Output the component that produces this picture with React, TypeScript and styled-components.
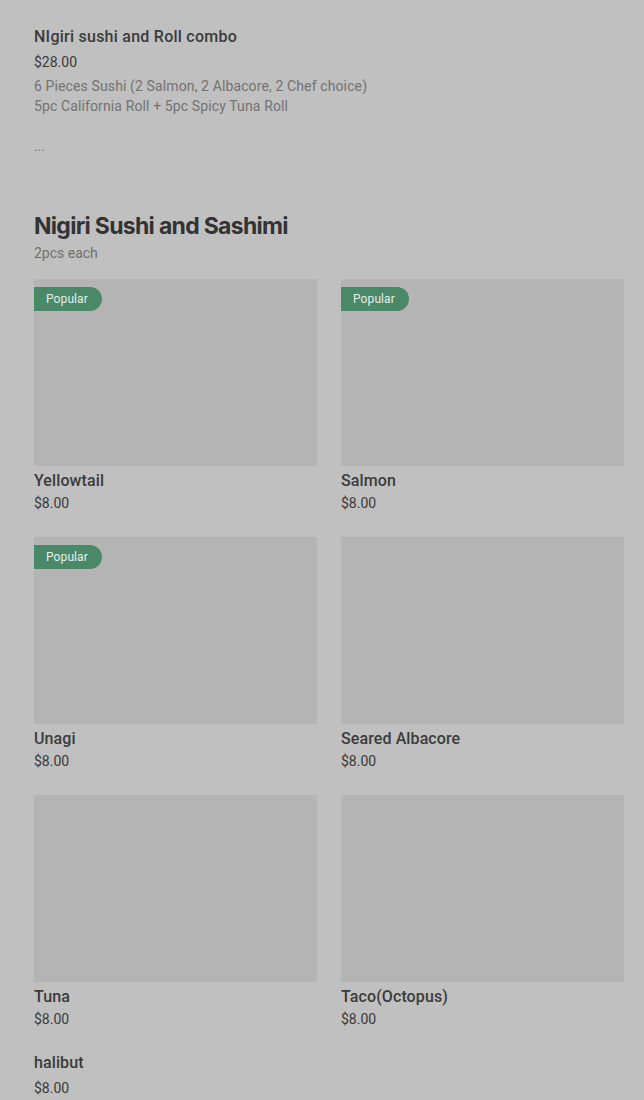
import React from "react";
import styled, { createGlobalStyle } from "styled-components";

const GlobalStyle = createGlobalStyle`
    body {
        margin: 0;
        background: #c0c0c0;
        font-family: Roboto, "Liberation Sans", sans-serif;
    }
`;

const Page = styled.div`
    padding: 27px 20px 0 34px;
    color: #333333;
`;

const ComboBlock = styled.div`
    margin-bottom: 56px;
`;

const ItemTitle = styled.div<{ $wide?: boolean }>`
    font-size: 16px;
    line-height: 20px;
    font-weight: 500;
    color: #3b3b3b;
    letter-spacing: ${props => (props.$wide ? "0.25px" : "0.1px")};
`;

const Price = styled.div<{ $gap?: number }>`
    margin-top: ${props => props.$gap ?? 3}px;
    font-size: 14px;
    line-height: 20px;
    color: #3a3a3a;
`;

const Description = styled.div`
    margin-top: 4px;
    font-size: 14px;
    line-height: 20px;
    color: #727272;
    letter-spacing: 0.12px;
    white-space: pre-line;
`;

const SectionHeader = styled.h2`
    margin: 0;
    font-family: Inter, "Liberation Sans", sans-serif;
    font-size: 23px;
    line-height: 28px;
    font-weight: 700;
    letter-spacing: -0.7px;
    color: #333333;
`;

const SectionSub = styled.div`
    margin-top: 3px;
    font-size: 14px;
    line-height: 20px;
    color: #707070;
`;

const Grid = styled.div`
    margin-top: 16px;
    display: grid;
    grid-template-columns: 283px 283px;
    column-gap: 24px;
    row-gap: 24px;
`;

const Card = styled.div``;

const ImageBox = styled.div`
    position: relative;
    height: 187px;
    background: #b4b4b4;
    margin-bottom: 5px;
`;

const Badge = styled.span`
    position: absolute;
    top: 8px;
    left: 0;
    height: 24px;
    padding: 0 14px 0 12px;
    display: flex;
    align-items: center;
    background: #4a8968;
    color: #e6eee9;
    font-size: 12px;
    letter-spacing: 0.1px;
    border-radius: 0 12px 12px 0;
`;

interface MenuItem {
    name: string;
    price: string;
    popular?: boolean;
    image?: boolean;
}

const items: MenuItem[] = [
    { name: "Yellowtail", price: "$8.00", popular: true, image: true },
    { name: "Salmon", price: "$8.00", popular: true, image: true },
    { name: "Unagi", price: "$8.00", popular: true, image: true },
    { name: "Seared Albacore", price: "$8.00", image: true },
    { name: "Tuna", price: "$8.00", image: true },
    { name: "Taco(Octopus)", price: "$8.00", image: true },
    { name: "halibut", price: "$8.00" },
];

const App = () => {
    return (
        <Page>
            <GlobalStyle />
            <ComboBlock>
                <ItemTitle $wide>NIgiri sushi and Roll combo</ItemTitle>
                <Price $gap={5}>$28.00</Price>
                <Description>
                    {"6 Pieces Sushi (2 Salmon, 2 Albacore, 2 Chef choice)\n5pc California Roll + 5pc Spicy Tuna Roll\n\n..."}
                </Description>
            </ComboBlock>
            <SectionHeader>Nigiri Sushi and Sashimi</SectionHeader>
            <SectionSub>2pcs each</SectionSub>
            <Grid>
                {items.map(item => (
                    <Card key={item.name}>
                        {item.image && (
                            <ImageBox>
                                {item.popular && <Badge>Popular</Badge>}
                            </ImageBox>
                        )}
                        <ItemTitle>{item.name}</ItemTitle>
                        <Price $gap={item.image ? 2 : 5}>{item.price}</Price>
                    </Card>
                ))}
            </Grid>
        </Page>
    );
};

export default App;
